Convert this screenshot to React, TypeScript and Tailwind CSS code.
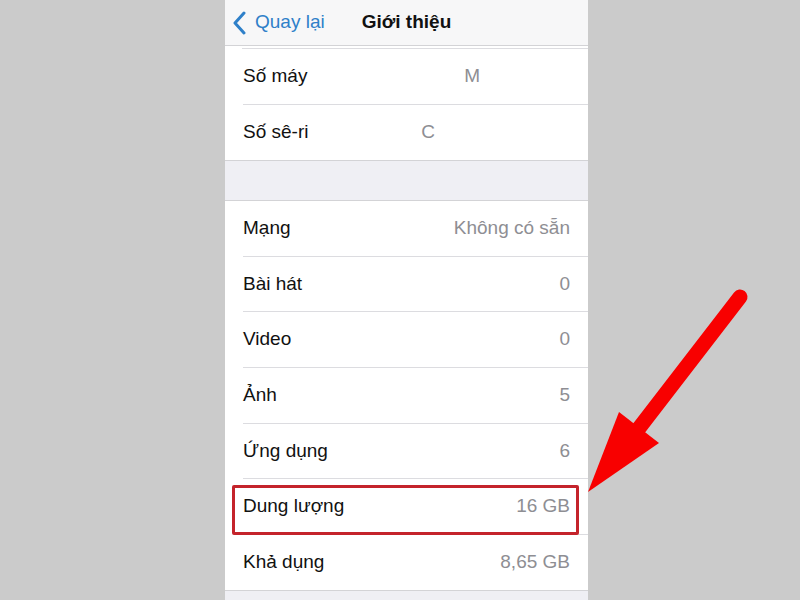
const rowsA = [
  { label: "Số máy", value: "M", valueClass: "pr-[90px]" },
  { label: "Số sê-ri", value: "C", valueClass: "pr-[135px]" },
];

const rowsB = [
  { label: "Mạng", value: "Không có sẵn" },
  { label: "Bài hát", value: "0" },
  { label: "Video", value: "0" },
  { label: "Ảnh", value: "5" },
  { label: "Ứng dụng", value: "6" },
  { label: "Dung lượng", value: "16 GB", boxed: true },
  { label: "Khả dụng", value: "8,65 GB" },
];

function Row({
  label,
  value,
  valueClass,
  boxed,
  last,
}: {
  label: string;
  value: string;
  valueClass?: string;
  boxed?: boolean;
  last?: boolean;
}) {
  return (
    <div className="relative h-[55.6px] pl-[18px]">
      <div
        className={
          "flex h-full items-center justify-between pr-[18px] " +
          (last ? "" : "border-b border-[#dcdce0]")
        }
      >
        <span className="text-[19px] text-[#111]">{label}</span>
        <span className={"text-[19px] text-[#8e8e93] " + (valueClass ?? "")}>
          {value}
        </span>
      </div>
      {boxed && (
        <div className="absolute left-[7px] right-[9px] top-[6px] bottom-0 rounded-[2px] border-[3px] border-[#c4232b]" />
      )}
    </div>
  );
}

export default function App() {
  return (
    <div
      className="relative flex h-[600px] w-[800px] overflow-hidden bg-[#cbcbcb] pl-[225px]"
      style={{ fontFamily: '"Liberation Sans", Arial, sans-serif' }}
    >
      <div className="flex h-full w-[363px] flex-col bg-[#efeff4]">
        {/* nav bar */}
        <div className="relative flex h-[46px] shrink-0 items-center border-b border-[#d3d3d6] bg-[#f7f7f8]">
          <div className="flex items-center pl-[8px] text-[#2f80c9]">
            <svg width="14" height="24" viewBox="0 0 14 24" className="mr-[8px]">
              <path
                d="M11 2 L2 12 L11 22"
                fill="none"
                stroke="#2f80c9"
                strokeWidth="3"
                strokeLinecap="round"
                strokeLinejoin="round"
              />
            </svg>
            <span className="text-[19px]">Quay lại</span>
          </div>
          <div className="absolute inset-x-0 text-center text-[19px] font-semibold text-[#111] pointer-events-none">
            Giới thiệu
          </div>
        </div>

        {/* first group */}
        <div className="bg-white">
          <div className="ml-[17px] h-[3px] border-b border-[#dcdce0]" />
          {rowsA.map((r, i) => (
            <Row key={i} {...r} last={i === rowsA.length - 1} />
          ))}
        </div>
        <div className="h-[40px] shrink-0 border-t border-[#d3d3d6]" />

        {/* second group */}
        <div className="border-y border-[#d3d3d6] bg-white">
          {rowsB.map((r, i) => (
            <Row key={i} {...r} last={i === rowsB.length - 1} />
          ))}
        </div>
      </div>

      {/* arrow annotation */}
      <svg
        className="pointer-events-none absolute left-0 top-0"
        width="800"
        height="600"
        viewBox="0 0 800 600"
      >
        <line
          x1="740"
          y1="297"
          x2="636"
          y2="432"
          stroke="#f80000"
          strokeWidth="15"
          strokeLinecap="round"
        />
        <polygon points="588,492 619,412 659,443" fill="#f80000" />
      </svg>
    </div>
  );
}
